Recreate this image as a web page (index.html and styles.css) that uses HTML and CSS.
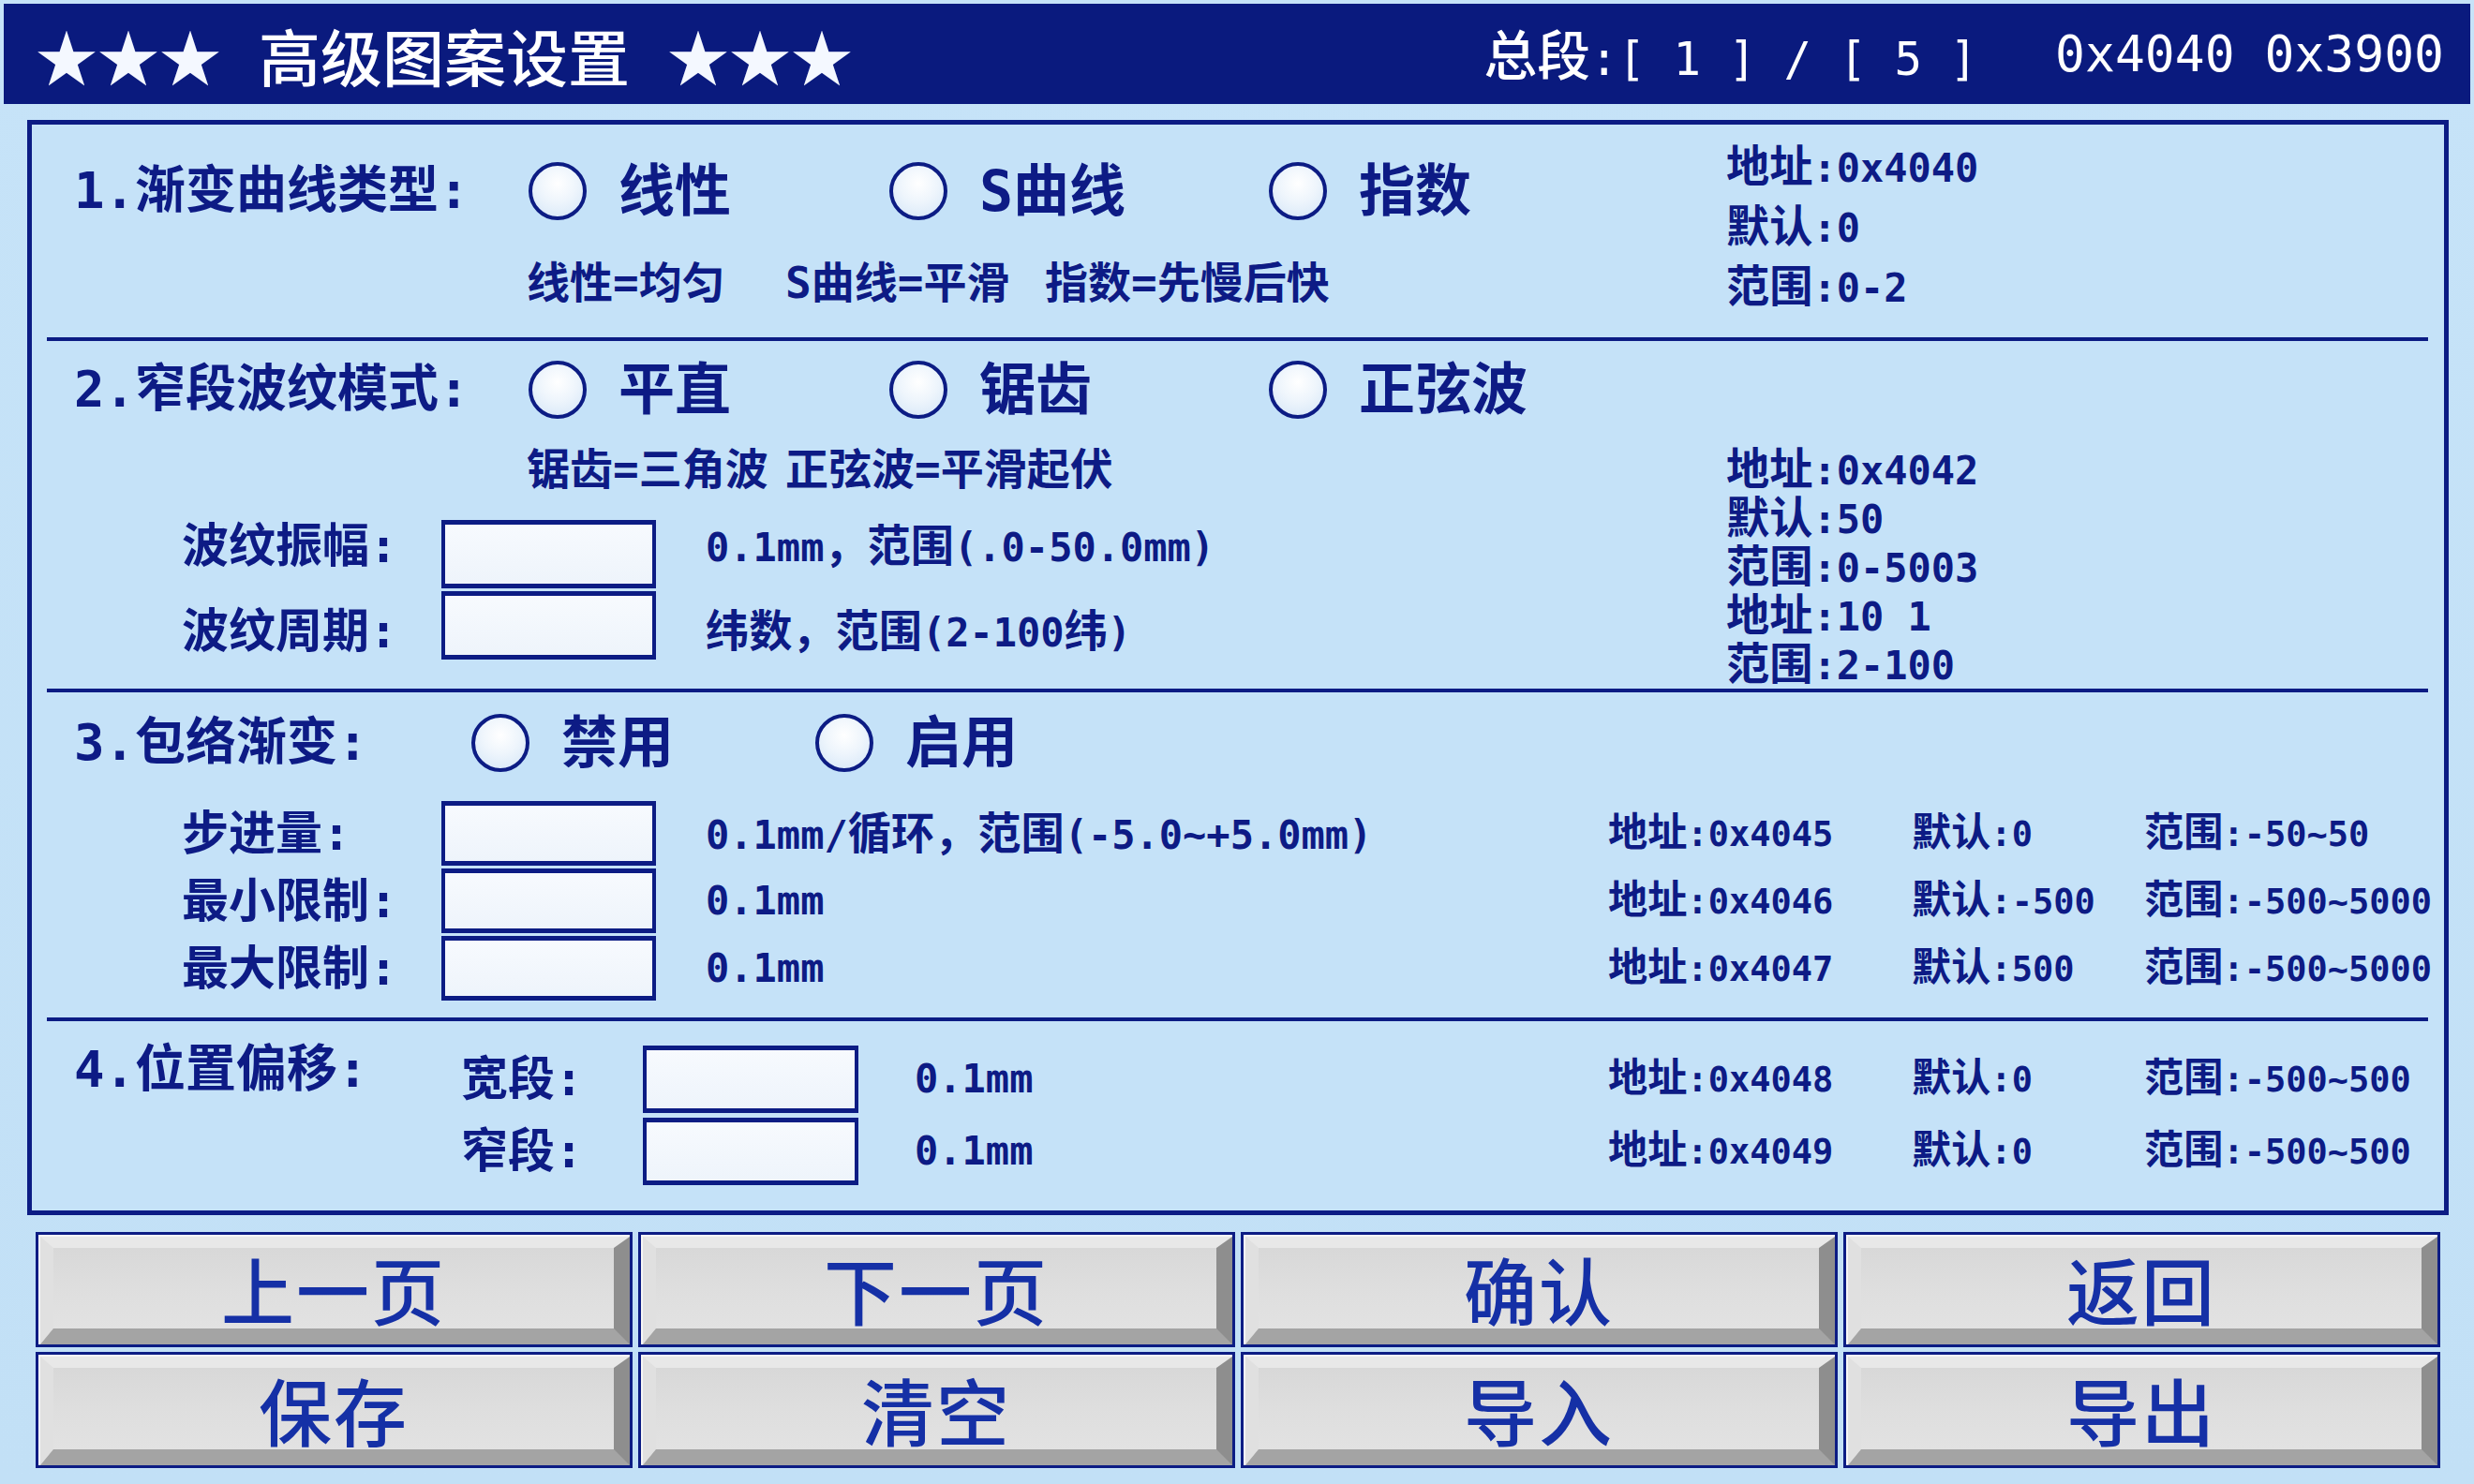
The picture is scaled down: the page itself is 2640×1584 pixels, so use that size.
FILE: index.html
```html
<!DOCTYPE html>
<html lang="zh-CN">
<head>
<meta charset="utf-8">
<title>高级图案设置</title>
<link rel="stylesheet" href="styles.css">
</head>
<body>
<div class="screen">
  <header class="header">
    <div class="hdr-left">
      <span class="stars">★★★</span>
      <span class="hdr-title">高级图案设置</span>
      <span class="stars">★★★</span>
    </div>
    <div class="hdr-right">
      <span class="seg"><span class="k">总段</span>:[ 1 ] / [ 5 ]</span>
      <span class="hex hex1">0x4040</span>
      <span class="hex">0x3900</span>
    </div>
  </header>

  <main class="panel">
    <section class="sec sec1">
      <div class="sec-main">
        <div class="radio-row">
          <div class="sec-title t1">1.渐变曲线类型:</div>
          <div class="opt o1"><span class="radio"></span><span class="opt-label">线性</span></div>
          <div class="opt o2"><span class="radio"></span><span class="opt-label">S曲线</span></div>
          <div class="opt"><span class="radio"></span><span class="opt-label">指数</span></div>
        </div>
        <div class="desc">
          <span class="d1">线性=均匀</span>
          <span class="d2">S曲线=平滑</span>
          <span>指数=先慢后快</span>
        </div>
      </div>
      <div class="info info1">
        <div class="line"><span class="k">地址</span>:0x4040</div>
        <div class="line"><span class="k">默认</span>:0</div>
        <div class="line"><span class="k">范围</span>:0-2</div>
      </div>
    </section>

    <section class="sec sec2">
      <div class="sec-main">
        <div class="radio-row">
          <div class="sec-title t1">2.窄段波纹模式:</div>
          <div class="opt o1"><span class="radio"></span><span class="opt-label">平直</span></div>
          <div class="opt o2"><span class="radio"></span><span class="opt-label">锯齿</span></div>
          <div class="opt"><span class="radio"></span><span class="opt-label">正弦波</span></div>
        </div>
        <div class="desc desc2">
          <span class="d1">锯齿=三角波</span>
          <span>正弦波=平滑起伏</span>
        </div>
        <div class="fields">
          <div class="field-label up">波纹振幅:</div>
          <div class="box"></div>
          <div class="unit up">0.1mm<span class="k">，范围</span>(.0-50.0mm)</div>
          <div class="field-label down">波纹周期:</div>
          <div class="box"></div>
          <div class="unit down"><span class="k">纬数，范围</span>(2-100<span class="k">纬</span>)</div>
        </div>
      </div>
      <div class="info info2">
        <div class="line"><span class="k">地址</span>:0x4042</div>
        <div class="line"><span class="k">默认</span>:50</div>
        <div class="line"><span class="k">范围</span>:0-5003</div>
        <div class="line"><span class="k">地址</span>:10 1</div>
        <div class="line"><span class="k">范围</span>:2-100</div>
      </div>
    </section>

    <section class="sec sec3">
      <div class="radio-row">
        <div class="sec-title t3">3.包络渐变:</div>
        <div class="opt o3"><span class="radio"></span><span class="opt-label">禁用</span></div>
        <div class="opt"><span class="radio"></span><span class="opt-label">启用</span></div>
      </div>
      <div class="grid3">
        <div class="field-label">步进量:</div>
        <div class="box b3"></div>
        <div class="unit">0.1mm/<span class="k">循环，范围</span>(-5.0~+5.0mm)</div>
        <div class="meta"><span class="k">地址</span>:0x4045</div>
        <div class="meta"><span class="k">默认</span>:0</div>
        <div class="meta"><span class="k">范围</span>:-50~50</div>

        <div class="field-label">最小限制:</div>
        <div class="box b3"></div>
        <div class="unit">0.1mm</div>
        <div class="meta"><span class="k">地址</span>:0x4046</div>
        <div class="meta"><span class="k">默认</span>:-500</div>
        <div class="meta"><span class="k">范围</span>:-500~5000</div>

        <div class="field-label">最大限制:</div>
        <div class="box b3"></div>
        <div class="unit">0.1mm</div>
        <div class="meta"><span class="k">地址</span>:0x4047</div>
        <div class="meta"><span class="k">默认</span>:500</div>
        <div class="meta"><span class="k">范围</span>:-500~5000</div>
      </div>
    </section>

    <section class="sec sec4">
      <div class="grid4">
        <div class="sec-title t4">4.位置偏移:</div>
        <div class="field-label">宽段:</div>
        <div class="box b4"></div>
        <div class="unit u4">0.1mm</div>
        <div class="meta"><span class="k">地址</span>:0x4048</div>
        <div class="meta"><span class="k">默认</span>:0</div>
        <div class="meta"><span class="k">范围</span>:-500~500</div>

        <div></div>
        <div class="field-label">窄段:</div>
        <div class="box b4"></div>
        <div class="unit u4">0.1mm</div>
        <div class="meta"><span class="k">地址</span>:0x4049</div>
        <div class="meta"><span class="k">默认</span>:0</div>
        <div class="meta"><span class="k">范围</span>:-500~500</div>
      </div>
    </section>
  </main>

  <nav class="buttons">
    <div class="btn"><span class="face">上一页</span></div>
    <div class="btn"><span class="face">下一页</span></div>
    <div class="btn"><span class="face">确认</span></div>
    <div class="btn"><span class="face">返回</span></div>
    <div class="btn"><span class="face">保存</span></div>
    <div class="btn"><span class="face">清空</span></div>
    <div class="btn"><span class="face">导入</span></div>
    <div class="btn"><span class="face">导出</span></div>
  </nav>
</div>
</body>
</html>
```

FILE: styles.css
```css
* { box-sizing: border-box; }
html, body { margin: 0; padding: 0; }
body {
  width: 2640px;
  height: 1584px;
  overflow: hidden;
  background: #c3e1f7;
  font-family: "DejaVu Sans Mono", "Noto Sans CJK SC", monospace;
  color: #0d1b85;
}
.screen {
  height: 1584px;
  padding: 4px 4px 0;
  background: linear-gradient(180deg, #c6e3f8 0%, #c2e0f6 100%);
}

/* header */
.header {
  height: 107px;
  background: #0a1a7e;
  display: flex;
  align-items: center;
  justify-content: space-between;
  padding: 0 28px 0 34px;
  color: #ffffff;
}
.hdr-left {
  display: flex;
  align-items: center;
  gap: 40px;
  font-family: "Noto Sans CJK SC", "DejaVu Sans", sans-serif;
  font-size: 66px;
  line-height: 1;
}
.stars { color: #f4f8ff; }
.hdr-title { font-weight: 500; }
.hdr-right {
  display: flex;
  align-items: center;
  line-height: 1;
}
.seg { font-size: 49px; margin-right: 83px; }
.seg .k { font-size: 1.16em; font-weight: 500; }
.hex { font-size: 53px; }
.hex1 { margin-right: 32px; }

.k { font-family: "Noto Sans CJK SC", sans-serif; line-height: 1; }

/* main panel */
.panel {
  margin: 17px 23px 0 25px;
  height: 1169px;
  border: 5px solid #0c1c84;
  background: #c5e2f8;
}
.sec {
  margin: 0 17px 0 16px;
  padding-left: 29px;
  border-bottom: 4px solid #0c1c84;
}
.sec1 { height: 231px; display: flex; align-items: flex-start; }
.sec2 { height: 375px; display: flex; align-items: flex-start; }
.sec3 { height: 351px; padding-top: 23px; }
.sec4 { height: 202px; padding-top: 26px; border-bottom: 0; }

.sec-main { width: 1763px; flex: none; }
.sec1 .sec-main { padding-top: 40px; }
.sec2 .sec-main { padding-top: 21px; }

.radio-row {
  display: flex;
  align-items: center;
  height: 62px;
}
.sec-title {
  font-size: 54px;
  font-weight: 700;
  line-height: 62px;
  flex: none;
  white-space: nowrap;
}
.t1 { width: 485px; }
.t3 { width: 424px; }
.opt { display: flex; align-items: center; flex: none; }
.o1 { width: 385px; }
.o2 { width: 405px; }
.o3 { width: 367px; }
.radio {
  width: 62px;
  height: 62px;
  flex: none;
  border: 4px solid #0c1c84;
  border-radius: 50%;
  background: radial-gradient(circle at 50% 35%, #ffffff 0%, #eef5fc 45%, #d3e5f7 100%);
}
.opt-label {
  margin-left: 34px;
  font-size: 60px;
  font-weight: 700;
  line-height: 62px;
  white-space: nowrap;
}

.desc {
  display: flex;
  margin: 42px 0 0 483px;
  height: 50px;
  font-size: 46px;
  font-weight: 700;
  line-height: 50px;
  white-space: nowrap;
}
.desc2 { margin-top: 29px; }
.d1 { width: 276px; flex: none; }
.d2 { width: 277px; flex: none; }

.fields {
  display: grid;
  grid-template-columns: 277px 229px auto;
  grid-auto-rows: 73px;
  row-gap: 3px;
  margin: 29px 0 0 115px;
  align-items: center;
}
.field-label {
  font-size: 50px;
  font-weight: 700;
  line-height: 60px;
  white-space: nowrap;
}
.fields .up { margin-top: -18px; }
.fields .down { margin-top: 12px; }
.box {
  height: 100%;
  border: 4px solid #0c1c84;
  border-top-width: 5px;
  border-bottom-width: 5px;
  background: linear-gradient(180deg, #f7fafe 0%, #eef4fb 100%);
}
.unit {
  padding-left: 53px;
  font-size: 42px;
  font-weight: 700;
  line-height: 50px;
  white-space: nowrap;
}
.unit .k { font-size: 1.1em; }

.info {
  font-size: 42px;
  font-weight: 700;
  white-space: nowrap;
}
.info .k { font-size: 1.1em; }
.info1 { padding-top: 15px; }
.info1 .line { height: 64px; line-height: 64px; }
.info2 { padding-top: 110px; }
.info2 .line { height: 52px; line-height: 52px; }

/* section 3 grid */
.grid3 {
  display: grid;
  grid-template-columns: 277px 229px 1016px 324px 248px auto;
  grid-auto-rows: 69px;
  row-gap: 3px;
  margin: 31px 0 0 115px;
  align-items: center;
}
.meta {
  font-size: 37px;
  font-weight: 700;
  line-height: 50px;
  white-space: nowrap;
}
.meta .k { font-size: 1.14em; }

/* section 4 grid */
.grid4 {
  display: grid;
  grid-template-columns: 413px 194px 230px 800px 324px 248px auto;
  grid-auto-rows: 72px;
  row-gap: 5px;
  align-items: center;
}
.t4 { margin-top: -20px; }
.u4 { padding-left: 60px; }

/* buttons */
.buttons {
  display: grid;
  grid-template-columns: repeat(4, 637px);
  grid-template-rows: 123px 124px;
  column-gap: 6px;
  row-gap: 5px;
  margin: 18px 0 0 34px;
}
.btn {
  border: 3px solid #0c1c84;
  background: #f6f6f6;
  padding: 2px 0 0 2px;
}
.face {
  height: 100%;
  display: flex;
  align-items: center;
  justify-content: center;
  border-style: solid;
  border-width: 12px 17px 17px 14px;
  border-color: #e8e8e8 #8e8e8e #a4a4a4 #e0e0e0;
  background: linear-gradient(180deg, #d8d8d8 0%, #dedede 50%, #e2e2e2 100%);
  font-family: "Noto Sans CJK SC", sans-serif;
  font-size: 78px;
  font-weight: 500;
  color: #1530a6;
  line-height: 1;
  letter-spacing: 2px;
}
```
